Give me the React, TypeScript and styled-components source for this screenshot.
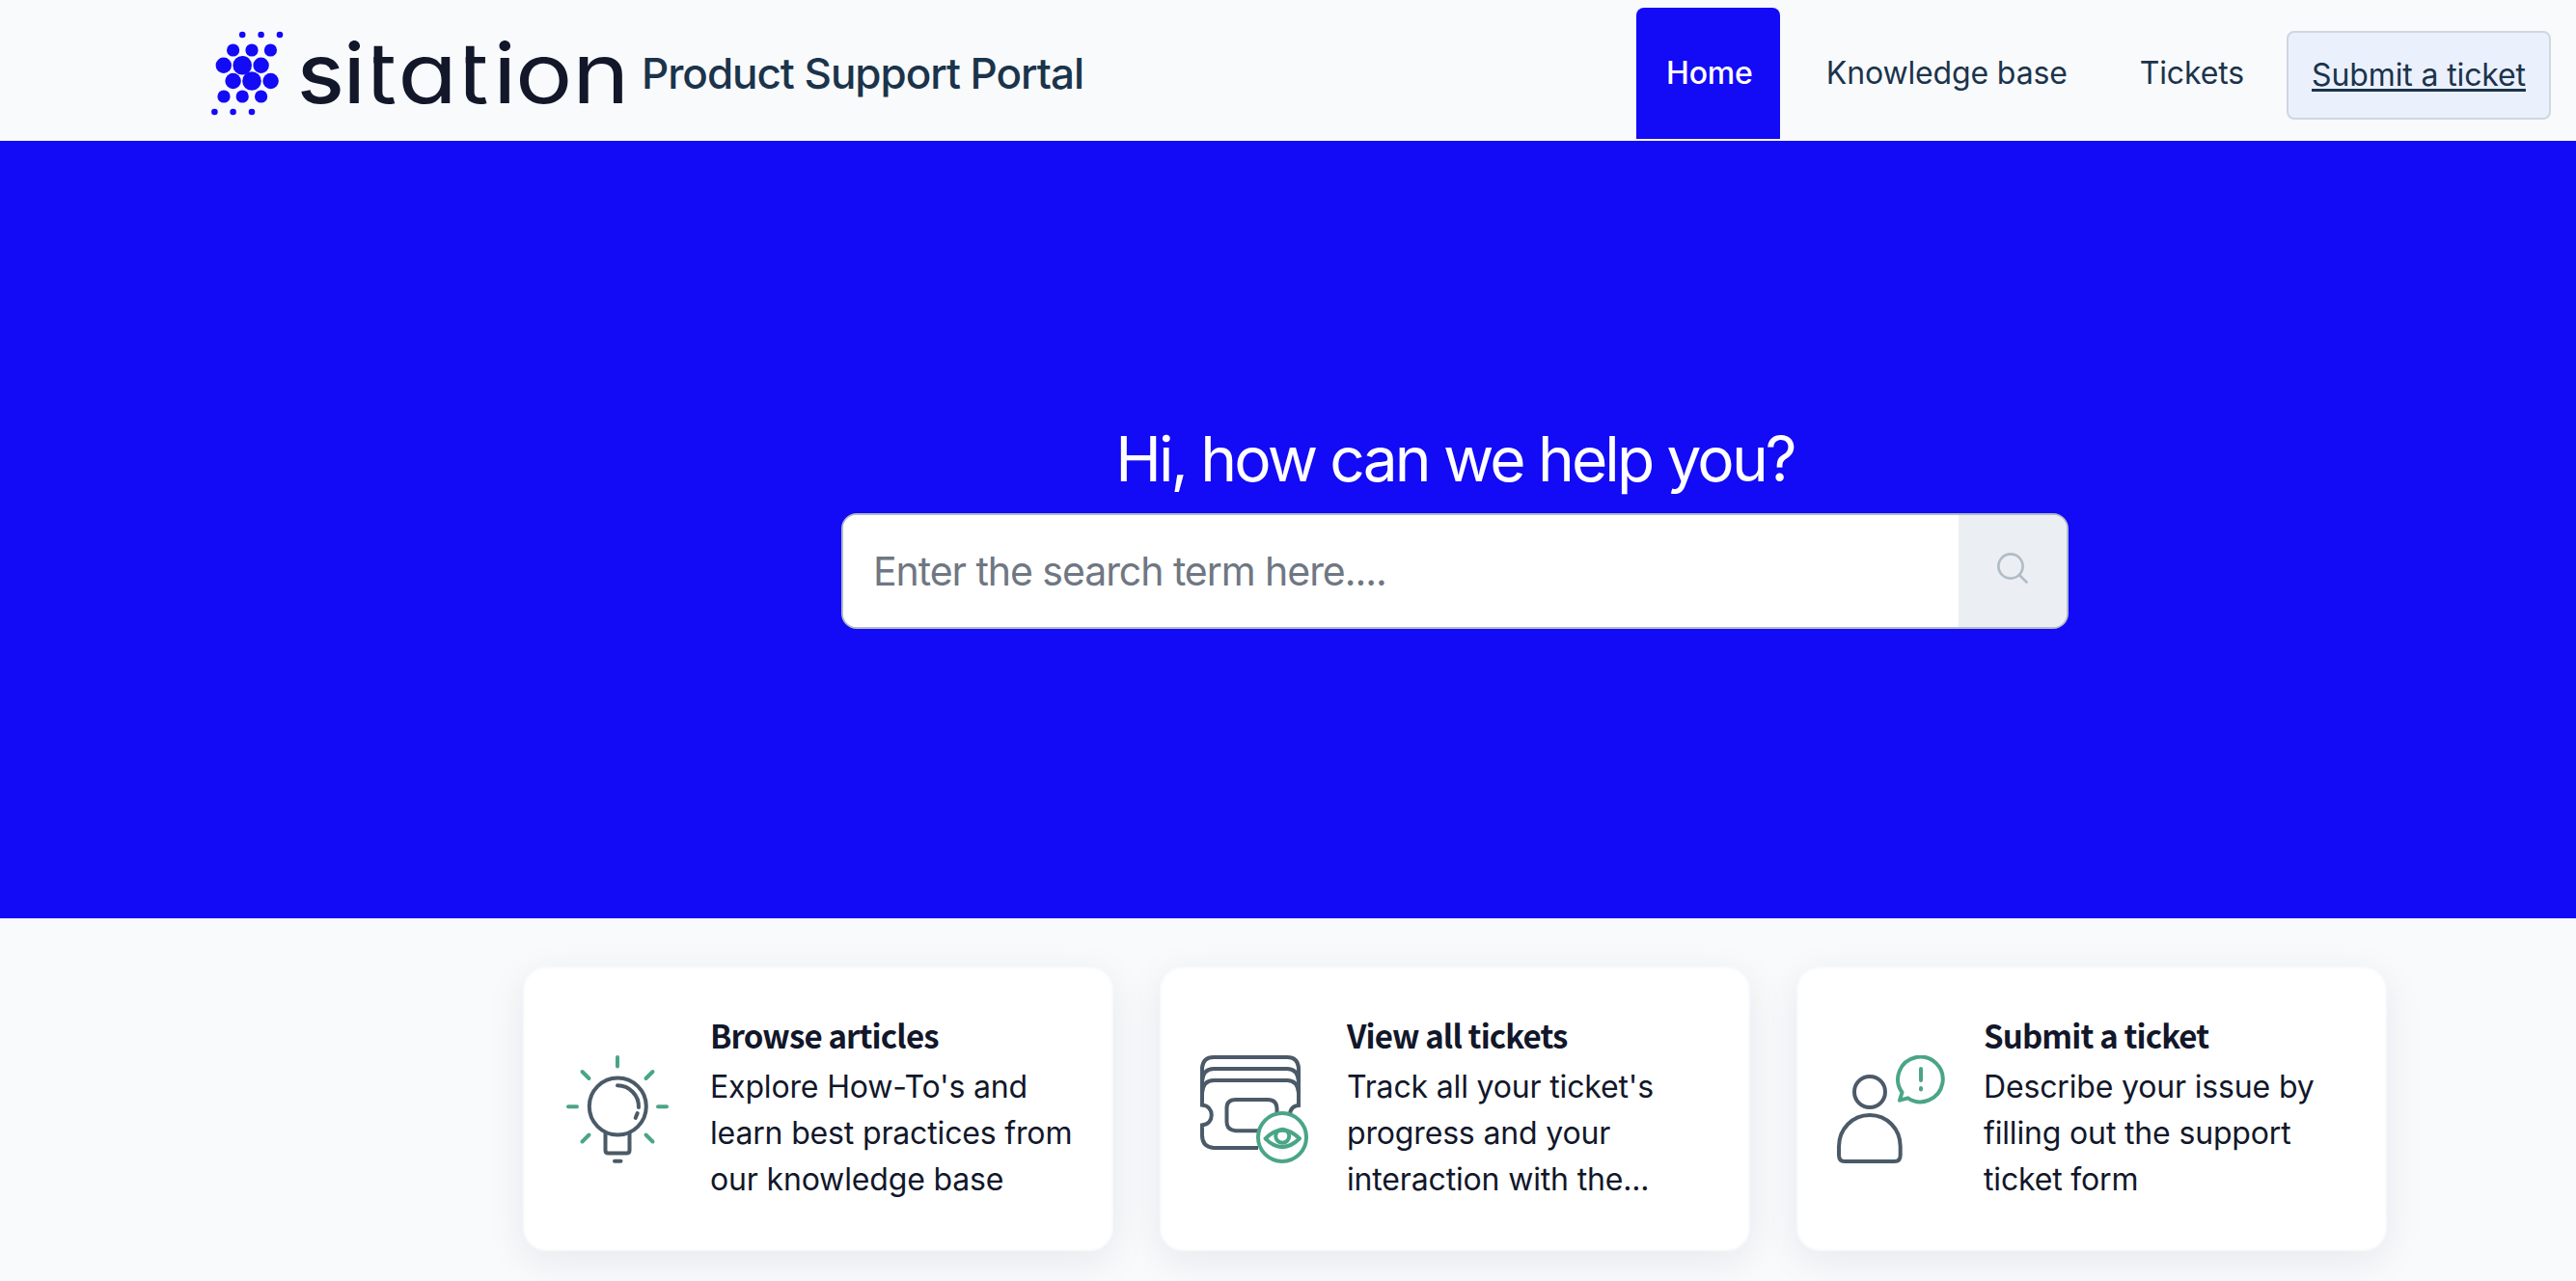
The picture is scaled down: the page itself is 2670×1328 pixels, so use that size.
import React, { useState } from "react";
import styled, { createGlobalStyle } from "styled-components";

const Colors = {
  page: "#f9fafc",
  brand: "#130af6",
  navy: "#1b344b",
  ink: "#12172a",
  slate: "#4b5a68",
  green: "#4aa587",
  line: "#b1bcc6",
};

const LOGO_DOTS = [
  [51.2, 36, 3.3],
  [70.6, 36, 3.3],
  [90, 36, 3.3],
  [41.6, 52, 6.6],
  [61, 52, 6.6],
  [80.4, 52, 6.6],
  [31.8, 67.7, 8.2],
  [51.2, 67.7, 9.8],
  [70.6, 67.7, 8.2],
  [41.6, 84, 8.2],
  [61, 84, 9.8],
  [80.6, 84, 8.2],
  [32, 100, 6.6],
  [51.2, 100, 6.6],
  [70.6, 100, 6.6],
  [22.4, 116, 3.3],
  [41.6, 116, 3.3],
  [61, 116, 3.3],
];

// letter, x, horizontal stretch, weight
const LOGO_LETTERS: [string, number, number, number][] = [
  ["s", 108, 1.04, 450],
  ["i", 156.5, 0.98, 450],
  ["t", 178.2, 1.16, 400],
  ["a", 212.2, 1.16, 400],
  ["t", 273.6, 1.16, 400],
  ["i", 312.6, 0.98, 450],
  ["o", 334, 1.14, 400],
  ["n", 393, 1.16, 400],
];

function Logo() {
  return (
    <LogoSvg viewBox="0 0 460 146">
      <g fill={Colors.brand}>
        {LOGO_DOTS.map(([cx, cy, r]) => (
          <circle key={`${cx}-${cy}`} cx={cx} cy={cy} r={r} />
        ))}
      </g>
      {/* the wordmark's t has no bar on the left of its stem */}
      <clipPath id="wordmark">
        <path d="M100 20h78v110h-78zM187.200 20h81.800v110h-81.800zM282.600 20h177v110h-177z" />
      </clipPath>
      <g clipPath="url(#wordmark)">
        {LOGO_LETTERS.map(([letter, x, stretch, weight]) => (
          <LogoLetter
            key={x}
            weight={weight}
            transform={`translate(${x} 107.2) scale(${stretch} 1)`}
          >
            {letter}
          </LogoLetter>
        ))}
      </g>
    </LogoSvg>
  );
}

function BulbIcon() {
  return (
    <CardIcon viewBox="24 24 112 112">
      <g stroke={Colors.slate}>
        <circle cx="80.3" cy="77" r="29.5" />
        <path d="M80 55.3a22 22 0 0 1 22 22.7M100.7 84l-2 5" />
        <path d="M67.5 105v17.500q0 3 3 3h19q3 0 3-3V105M77 133.700h6.500" />
      </g>
      <path
        stroke={Colors.green}
        d="M80 26v9.500M43.500 41l7 7M116.500 41l-7 7M29 77.200h9M122 77.200h9M43.500 113.500l7-7M116.500 113.500l-7-7"
      />
    </CardIcon>
  );
}

function TicketsIcon() {
  return (
    <CardIcon viewBox="24 24 112 112">
      <g stroke={Colors.slate} strokeLinecap="butt">
        <path d="M84 120H38q-12-1-12-13V94.500M26 96.200c13 0 13-20.400 0-20.400M26 77.500V37q1-11 12-11h76q11 0 12 11v40.500M128 75.800q-10 0-11 9" />
        <path d="M26 51q1-13 12-13h76q11 0 12 13M26 63q1-13 12-13h76q11 0 12 13" />
        <path d="M84 102.300H60.500q-9-1-9-9V79q0-9 9-9H94q9 0 9.500 9v6" />
      </g>
      <g stroke={Colors.green}>
        <circle cx="109" cy="109" r="25" fill="#fff" />
        <path d="M91.500 110.300q17.700-17.500 35.500 0q-17.800 17.500-35.500 0Z" />
        <circle cx="109.200" cy="107.800" r="7" />
      </g>
    </CardIcon>
  );
}

function PersonIcon() {
  return (
    <CardIcon viewBox="24 24 112 112">
      <g stroke={Colors.slate}>
        <circle cx="58" cy="62" r="16" />
        <path d="M26 118.500c0-18 14-32.500 32-32.500s31.700 14.500 31.700 32.500v9q0 6.500-6 6.500H32q-6 0-6-6.500Z" />
      </g>
      <path
        stroke={Colors.green}
        d="M91.500 62.500A23.300 23.300 0 1 1 97.500 68.300L89 70.700Z"
      />
      <path stroke={Colors.green} d="M111 38v12M111 58v1.500" />
    </CardIcon>
  );
}

const CARDS = [
  {
    title: "Browse articles",
    lines: ["Explore How-To's and", "learn best practices from", "our knowledge base"],
    Icon: BulbIcon,
  },
  {
    title: "View all tickets",
    lines: ["Track all your ticket's", "progress and your", "interaction with the..."],
    Icon: TicketsIcon,
  },
  {
    title: "Submit a ticket",
    lines: ["Describe your issue by", "filling out the support", "ticket form"],
    Icon: PersonIcon,
  },
];

function App() {
  const [term, setTerm] = useState("");
  return (
    <Page>
      <GlobalStyle />
      <Header>
        <Logo />
        <PortalName>Product Support Portal</PortalName>
        <Nav>
          <NavTab isActive>Home</NavTab>
          <NavTab>Knowledge base</NavTab>
          <NavTab>Tickets</NavTab>
          <SubmitLink>Submit a ticket</SubmitLink>
        </Nav>
      </Header>
      <Hero>
        <Greeting>Hi, how can we help you?</Greeting>
        <SearchBox>
          <SearchInput
            placeholder="Enter the search term here...."
            value={term}
            onChange={e => setTerm(e.target.value)}
          />
          <SearchButton aria-label="Search">
            <SearchSvg viewBox="0 0 34 34">
              <circle cx="15" cy="15" r="12.600" />
              <path d="M24 24l7.500 7.500" />
            </SearchSvg>
          </SearchButton>
        </SearchBox>
      </Hero>
      <Cards>
        {CARDS.map(({ title, lines, Icon }) => (
          <Card key={title}>
            <Icon />
            <div>
              <CardTitle>{title}</CardTitle>
              {lines.map(line => (
                <CardLine key={line}>{line}</CardLine>
              ))}
            </div>
          </Card>
        ))}
      </Cards>
    </Page>
  );
}

const GlobalStyle = createGlobalStyle`
  * {
    box-sizing: border-box;
  }
  body {
    margin: 0;
    background-color: ${Colors.page};
    font-family: Inter, "Liberation Sans", sans-serif;
  }
`;

const Page = styled.div`
  height: 1328px;
  overflow: hidden;
  background-color: ${Colors.page};
`;

const Header = styled.header`
  display: flex;
  height: 146px;
  padding: 0 26px 0 200px;
`;

const LogoSvg = styled.svg`
  width: 460px;
  height: 146px;
`;

const LogoLetter = styled.text<{ weight: number }>`
  font-family: Inter, sans-serif;
  font-size: 87px;
  font-weight: ${p => p.weight};
  font-feature-settings: "cv11";
  fill: ${Colors.ink};
`;

const PortalName = styled.div`
  margin-left: 5px;
  padding-top: 2px;
  line-height: 148px;
  font-size: 44px;
  font-weight: 450;
  letter-spacing: -1.03px;
  white-space: nowrap;
  color: ${Colors.navy};
`;

const Nav = styled.nav`
  display: flex;
  flex: 1;
  justify-content: flex-end;
  padding-top: 8px;
`;

const NavTab = styled.a<{ isActive?: boolean }>`
  height: 136px;
  margin-right: ${p => (p.isActive ? 17 : 16)}px;
  padding: 0 28px 0 31px;
  border-radius: 8px 8px 0 0;
  line-height: 135px;
  font-size: 32px;
  font-weight: ${p => (p.isActive ? 450 : 400)};
  letter-spacing: -0.14px;
  white-space: nowrap;
  color: ${p => (p.isActive ? "white" : Colors.navy)};
  background-color: ${p => (p.isActive ? Colors.brand : "transparent")};
  cursor: pointer;
`;

const SubmitLink = styled.a`
  width: 274px;
  height: 92px;
  margin-top: 24px;
  border: 2px solid #cfd7df;
  border-radius: 8px;
  line-height: 88px;
  font-size: 32px;
  letter-spacing: -0.12px;
  text-align: center;
  text-decoration: underline;
  text-decoration-thickness: 3px;
  text-underline-offset: 3px;
  white-space: nowrap;
  color: ${Colors.navy};
  background-color: #ebf0fd;
  cursor: pointer;
`;

const Hero = styled.section`
  display: flex;
  flex-direction: column;
  align-items: center;
  height: 806px;
  padding: 290px 0 0 346px;
  background-color: ${Colors.brand};
`;

const Greeting = styled.h1`
  margin: 0;
  line-height: 80px;
  font-size: 64px;
  font-weight: 420;
  letter-spacing: -2.85px;
  color: white;
`;

const SearchBox = styled.div`
  display: flex;
  width: 1272px;
  height: 120px;
  margin-top: 16px;
  border: 2px solid ${Colors.line};
  border-radius: 16px;
  background-color: white;
  overflow: hidden;
`;

const SearchInput = styled.input`
  flex: 1;
  padding: 0 31px;
  border: none;
  outline: none;
  font-family: inherit;
  font-size: 41px;
  letter-spacing: -1.05px;
  color: ${Colors.ink};
  &::placeholder {
    color: #6f7782;
    opacity: 1;
  }
`;

const SearchButton = styled.button`
  display: flex;
  justify-content: center;
  align-items: center;
  width: 112px;
  padding: 0 0 6px;
  border: none;
  background-color: #ebeff4;
  cursor: pointer;
`;

const SearchSvg = styled.svg`
  width: 34px;
  height: 34px;
  fill: none;
  stroke: ${Colors.line};
  stroke-width: 2.7;
  stroke-linecap: round;
`;

const Cards = styled.section`
  display: flex;
  gap: 48px;
  padding: 50px 0 0 542px;
`;

const Card = styled.div`
  display: flex;
  align-items: center;
  width: 612px;
  height: 295px;
  padding-left: 40px;
  border: 2px solid #f9fafc;
  border-radius: 24px;
  background-color: white;
  box-shadow: 0 10px 40px rgba(18, 23, 42, 0.08);
`;

const CardIcon = styled.svg`
  flex: none;
  width: 112px;
  height: 112px;
  margin-right: 40px;
  fill: none;
  stroke-width: 4;
  stroke-linecap: round;
  stroke-linejoin: round;
`;

const CardTitle = styled.h3`
  margin: 0 0 10px;
  line-height: 40px;
  font-family: "Noto Sans CJK SC", sans-serif;
  font-size: 33px;
  font-weight: 700;
  letter-spacing: -0.85px;
  color: ${Colors.ink};
`;

const CardLine = styled.div`
  line-height: 48px;
  font-size: 32px;
  letter-spacing: -0.16px;
  white-space: nowrap;
  color: ${Colors.ink};
`;

export default App;
